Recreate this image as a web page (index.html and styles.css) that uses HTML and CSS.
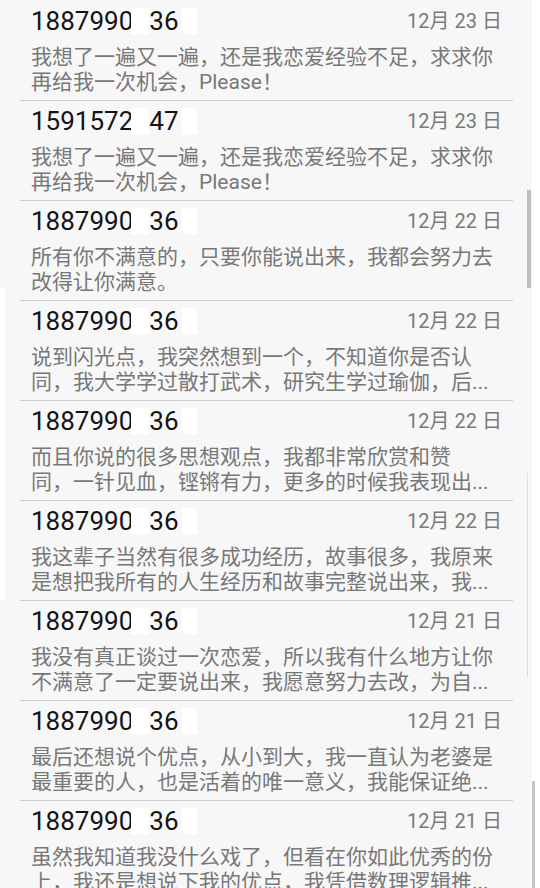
FILE: index.html
```html
<!DOCTYPE html>
<html lang="zh-CN">
<head>
<meta charset="utf-8">
<title>信息</title>
<link rel="stylesheet" href="styles.css">
</head>
<body>
<div class="screen">
  <div class="panel">
    <ul class="list">
      <li class="item">
        <div class="head"><span class="num">1887990<span class="mask"></span>36<span class="mask tail"></span></span><span class="date">12月 23 日</span></div>
        <div class="msg"><span class="line">我想了一遍又一遍，还是我恋爱经验不足，求求你</span><span class="line">再给我一次机会，Please！</span></div>
      </li>
      <li class="item">
        <div class="head"><span class="num">1591572<span class="mask"></span>47<span class="mask tail"></span></span><span class="date">12月 23 日</span></div>
        <div class="msg"><span class="line">我想了一遍又一遍，还是我恋爱经验不足，求求你</span><span class="line">再给我一次机会，Please！</span></div>
      </li>
      <li class="item">
        <div class="head"><span class="num">1887990<span class="mask"></span>36<span class="mask tail"></span></span><span class="date">12月 22 日</span></div>
        <div class="msg"><span class="line">所有你不满意的，只要你能说出来，我都会努力去</span><span class="line">改得让你满意。</span></div>
      </li>
      <li class="item">
        <div class="head"><span class="num">1887990<span class="mask"></span>36<span class="mask tail"></span></span><span class="date">12月 22 日</span></div>
        <div class="msg"><span class="line">说到闪光点，我突然想到一个，不知道你是否认</span><span class="line">同，我大学学过散打武术，研究生学过瑜伽，后...</span></div>
      </li>
      <li class="item">
        <div class="head"><span class="num">1887990<span class="mask"></span>36<span class="mask tail"></span></span><span class="date">12月 22 日</span></div>
        <div class="msg"><span class="line">而且你说的很多思想观点，我都非常欣赏和赞</span><span class="line">同，一针见血，铿锵有力，更多的时候我表现出...</span></div>
      </li>
      <li class="item">
        <div class="head"><span class="num">1887990<span class="mask"></span>36<span class="mask tail"></span></span><span class="date">12月 22 日</span></div>
        <div class="msg"><span class="line">我这辈子当然有很多成功经历，故事很多，我原来</span><span class="line">是想把我所有的人生经历和故事完整说出来，我...</span></div>
      </li>
      <li class="item">
        <div class="head"><span class="num">1887990<span class="mask"></span>36<span class="mask tail"></span></span><span class="date">12月 21 日</span></div>
        <div class="msg"><span class="line">我没有真正谈过一次恋爱，所以我有什么地方让你</span><span class="line">不满意了一定要说出来，我愿意努力去改，为自...</span></div>
      </li>
      <li class="item">
        <div class="head"><span class="num">1887990<span class="mask"></span>36<span class="mask tail"></span></span><span class="date">12月 21 日</span></div>
        <div class="msg"><span class="line">最后还想说个优点，从小到大，我一直认为老婆是</span><span class="line">最重要的人，也是活着的唯一意义，我能保证绝...</span></div>
      </li>
      <li class="item">
        <div class="head"><span class="num">1887990<span class="mask"></span>36<span class="mask tail"></span></span><span class="date">12月 21 日</span></div>
        <div class="msg"><span class="line">虽然我知道我没什么戏了，但看在你如此优秀的份</span><span class="line">上，我还是想说下我的优点，我凭借数理逻辑推...</span></div>
      </li>
    </ul>
  </div>
  <div class="edge"></div>
  <div class="thumb thumb-a"></div>
  <div class="thumb thumb-b"></div>
  <div class="thumb thumb-c"></div>
</div>
</body>
</html>
```

FILE: styles.css
```css
html, body {
  margin: 0;
  padding: 0;
  background: #ffffff;
}

.screen {
  position: relative;
  display: flex;
  width: 540px;
  height: 888px;
  overflow: hidden;
  font-family: Roboto, "Noto Sans CJK SC", sans-serif;
}

.panel {
  width: 532px;
  flex: none;
  background:
    linear-gradient(#ffffff, #ffffff) 0 288px / 5px 312px no-repeat,
    #f7f7f7;
}

.edge {
  flex: 1;
  background: #ffffff;
}

.list {
  list-style: none;
  margin: 0;
  padding: 0 0 0 20px;
}

.item {
  box-sizing: border-box;
  width: 493px;
  height: 100px;
  padding: 5px 11px 0 11px;
  border-bottom: 1px solid #cccccc;
}

.item:first-child {
  height: 101px;
  padding-top: 6px;
}

.head {
  display: flex;
  justify-content: space-between;
  align-items: flex-start;
  height: 30px;
}

.num {
  font-size: 26px;
  line-height: 30px;
  color: #141414;
  white-space: nowrap;
}

.mask {
  display: inline-block;
  width: 18px;
  height: 26px;
  margin-left: -2px;
  vertical-align: -4px;
  background: #ffffff;
}

.mask.tail {
  width: 15px;
  margin-left: 3px;
}

.date {
  font-size: 20px;
  line-height: 30px;
  color: #7a7a7a;
  white-space: nowrap;
}

.msg {
  margin-top: 9px;
  font-size: 21px;
  line-height: 25px;
  color: #787878;
}

.line {
  display: block;
  white-space: nowrap;
  overflow: hidden;
}

.thumb {
  position: absolute;
}

.thumb-a {
  left: 527px;
  top: 190px;
  width: 4px;
  height: 98px;
  background: #bdbdbd;
}

.thumb-b {
  left: 527px;
  top: 473px;
  width: 1px;
  height: 204px;
  background: #dddddd;
}

.thumb-c {
  left: 532px;
  top: 781px;
  width: 3px;
  height: 107px;
  background: #c6c6c6;
}
```
